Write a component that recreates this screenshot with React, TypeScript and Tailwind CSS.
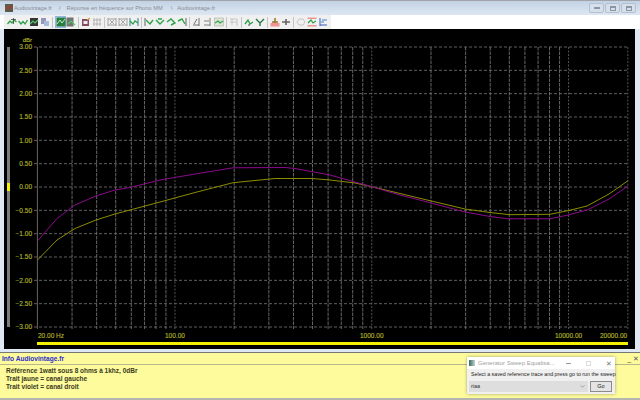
import type { ReactNode } from 'react';

const FONT = "font-['Liberation_Sans',Arial,sans-serif]";

const dbLevels = [3, 2.5, 2, 1.5, 1, 0.5, 0, -0.5, -1, -1.5, -2, -2.5, -3];
const freqs = [
  20, 30, 40, 50, 60, 70, 80, 90, 100, 200, 300, 400, 500, 600, 700, 800, 900, 1000, 2000, 3000, 4000, 5000, 6000,
  7000, 8000, 9000, 10000, 20000,
];
const decades = [100, 1000, 10000, 20000];

const xOf = (f: number) => 37.4 + (Math.log10(f) - Math.log10(20)) * 196.8;
const yOf = (db: number) => 187 - db * 46.67;

// relevés sur la capture (page px)
const violet =
  '37.5,241 57,218.5 75,205 96,196 115,190 130,187.5 160,180 195,174 233,167.8 285,167.5 295,168.5 330,175 371,186.5 400,195 430,202.7 465,212 490,216.5 508,218.8 550,218.8 568,215 587,210 609,199 628,186';
const jaune =
  '37.5,260 57,240 75,228.5 96,220 115,214 130,210 160,202 195,192.5 233,182.7 275,178.5 312,178.5 330,180 355,183 371,186.5 400,193.5 430,200.7 465,209 490,212.5 510,214.7 550,214.3 568,210.7 587,206 609,194 628,180.7';

function Chart() {
  return (
    <svg viewBox="4 29 631 320" className={`block h-[320px] w-[631px] ${FONT}`}>
      <rect x="4" y="29" width="631" height="320" fill="#000" />
      <rect x="7" y="47" width="3" height="280" fill="#7c7c7c" />
      <rect x="7" y="183" width="3" height="8" fill="#f5f000" />
      {dbLevels.map((db) => (
        <g key={db}>
          <line x1="34" x2="628" y1={yOf(db)} y2={yOf(db)} stroke="#6a6a6a" strokeWidth="0.9" strokeDasharray="3 2" />
          <text
            x="32"
            y={yOf(db) + 2.3}
            textAnchor="end"
            fontSize="6.5"
            fill="#b4b428"
            stroke="#b4b428"
            strokeWidth="0.15"
          >
            {db < 0 ? `−${(-db).toFixed(2)}` : db.toFixed(2)}
          </text>
        </g>
      ))}
      {freqs.map((f) => (
        <line
          key={f}
          x1={xOf(f)}
          x2={xOf(f)}
          y1="47"
          y2="329"
          stroke={decades.includes(f) ? '#5c5c5c' : '#707070'}
          strokeWidth="0.9"
          strokeDasharray={decades.includes(f) ? '2 1.5' : f === 20 ? undefined : '3.5 1'}
        />
      ))}
      <polyline points={jaune} fill="none" stroke="#8c8c00" strokeWidth="1" />
      <polyline points={violet} fill="none" stroke="#8c0a8c" strokeWidth="1" />
      <text x="32" y="42" textAnchor="end" fontSize="6" fill="#b4b428" stroke="#b4b428" strokeWidth="0.15">
        dBr
      </text>
      <g fontSize="6.5" fill="#b4b428" stroke="#b4b428" strokeWidth="0.15">
        <text x="38" y="338">
          20.00 Hz
        </text>
        <text x="165" y="338">
          100.00
        </text>
        <text x="360" y="338">
          1000.00
        </text>
        <text x="555" y="338">
          10000.00
        </text>
        <text x="600" y="338">
          20000.00
        </text>
      </g>
      <rect x="37" y="342" width="591" height="3" fill="#f5f000" />
    </svg>
  );
}

function Icon({ children, active }: { children: ReactNode; active?: boolean }) {
  return (
    <span
      className={`grid h-[12px] w-[11px] shrink-0 place-items-center ${active ? 'border border-[#8fb8e0] bg-[#c4dcf2]' : ''}`}
    >
      <svg viewBox="0 0 10 10" className="h-[10px] w-[10px] opacity-90" fill="none">
        {children}
      </svg>
    </span>
  );
}

const Sep = () => <span className="mx-[1.5px] h-[11px] w-px shrink-0 bg-[#c4c4c4]" />;

const G = '#1a9a38';
const wave = <path d="M0.5 7 3 4 5 6 7 3 9.5 5" stroke={G} strokeWidth="1.3" />;
const dip = <path d="M0.5 4 3 7 5 4.5 7 7 9.5 3" stroke={G} strokeWidth="1.3" />;
const cross = <path d="M6.5 1v6M4 2.5h5" stroke="#333" strokeWidth="0.8" />;
const bars = <path d="M1 1v8M9 1v8M1 2h8M1 8h8M3 3l4 4M7 3 3 7" stroke="#777" strokeWidth="0.7" />;
const grid = <path d="M2 1v8M5 1v8M8 1v8M1 3h8M1 7h8" stroke="#999" strokeWidth="0.7" />;

function Toolbar() {
  return (
    <div className="flex h-[14px] shrink-0 bg-white pl-[4px] pr-[4px]">
      <div className="flex w-[327px] items-center bg-[#f0f0f0] pl-[2.5px]">
        <Icon>{wave}{cross}</Icon>
        <Icon>{dip}</Icon>
        <Icon>
          <rect x="1" y="1" width="8" height="8" fill="#222" />
          <path d="M1 7 4 4 6 6 9 3" stroke="#3ec45a" strokeWidth="1.2" />
        </Icon>
        <Icon>
          <rect x="1" y="1" width="5" height="6" fill="#8d8db8" />
          <rect x="4" y="4" width="5" height="5" fill="#9db4dc" />
        </Icon>
        <Sep />
        <Icon active>
          <rect x="0.5" y="0.5" width="9" height="9" fill="#19732e" />
          <path d="M1 7 4 3 6 6 9 2" stroke="#b7f0b7" strokeWidth="1" />
        </Icon>
        <Icon>
          <rect x="0.5" y="0.5" width="7" height="9" fill="#666" />
          <path d="M2 7 5 4 9 8" stroke="#3ec45a" strokeWidth="1.2" />
        </Icon>
        <Sep />
        <Icon>
          <rect x="1" y="2" width="7" height="7" fill="#7a3b55" />
          <rect x="2.5" y="4" width="4" height="3" fill="#eee" />
          <path d="M6 3 9 1" stroke="#c8a020" strokeWidth="1.2" />
        </Icon>
        <Icon>{grid}</Icon>
        <Sep />
        <Icon>{bars}</Icon>
        <Icon>{bars}</Icon>
        <Icon>
          <path d="M1 1v8M9 1v8" stroke="#1d6e8c" strokeWidth="1" />
          <path d="M1 4 4 7 6 4 9 6" stroke={G} strokeWidth="1.3" />
        </Icon>
        <Sep />
        <Icon>
          <path d="M1 1v8" stroke="#444" strokeWidth="0.9" />
          <path d="M2 3 6 7 9 3" stroke={G} strokeWidth="1.4" />
        </Icon>
        <Icon>
          <path d="M1 3 5 7 9 3M3 2h4" stroke={G} strokeWidth="1.4" />
        </Icon>
        <Icon>
          <path d="M1 5 5 2 9 6 5 8" stroke={G} strokeWidth="1.4" />
        </Icon>
        <Icon>
          <path d="M9 1v8" stroke="#444" strokeWidth="0.9" />
          <path d="M1 4 5 2 8 7" stroke={G} strokeWidth="1.4" />
        </Icon>
        <Sep />
        <Icon>
          <path d="M7 1v8M1 8h6M2 7 5 2" stroke="#555" strokeWidth="0.9" />
        </Icon>
        <Icon>
          <path d="M7 1v8M1 8h6M1 4h5" stroke="#666" strokeWidth="0.9" />
        </Icon>
        <Icon>
          <rect x="0.5" y="1" width="9" height="8" fill="#d8e4d0" stroke="#999" strokeWidth="0.5" />
          <path d="M1 6 4 4 6 6 9 4" stroke={G} strokeWidth="1.1" />
        </Icon>
        <Sep />
        <Icon>
          <path d="M1 2h7v7M3 2v6M1 5h7" stroke="#bbb" strokeWidth="0.9" />
        </Icon>
        <Sep />
        <Icon>
          <path d="M1 7 4 3 6 7 9 5" stroke={G} strokeWidth="1.4" />
          <path d="M5 7v2" stroke="#333" strokeWidth="0.9" />
        </Icon>
        <Icon>
          <path d="M1 2 5 6 9 2M5 6v3" stroke="#176b33" strokeWidth="1.4" />
        </Icon>
        <Sep />
        <Icon>
          <rect x="0.5" y="6" width="9" height="3.5" fill="#f08a8a" />
          <path d="M5 1v5M2 5h6" stroke="#8a6a14" strokeWidth="1.5" />
        </Icon>
        <Icon>
          <path d="M1 5h8M5 2v6" stroke="#555" strokeWidth="1.6" />
        </Icon>
        <Sep />
        <Icon>
          <path d="M1 5 3 2h4l2 3-2 3H3z" stroke="#bbb" strokeWidth="0.9" />
        </Icon>
        <Icon>
          <rect x="0.5" y="8" width="9" height="1.5" fill="#f08a8a" />
          <rect x="0.5" y="0.5" width="9" height="1.5" fill="#f08a8a" />
          <path d="M1 6 4 3 6 6 9 4" stroke={G} strokeWidth="1.2" />
        </Icon>
        <Icon>
          <path d="M2 1v8M2 8h7" stroke="#2050b8" strokeWidth="1" />
          <path d="M3 5h3M4 3h5" stroke="#2b7dcc" strokeWidth="1.2" />
        </Icon>
      </div>
    </div>
  );
}

function WinButton({ children }: { children: ReactNode }) {
  return (
    <span className="grid h-[10px] w-[15px] place-items-center rounded-[2px] border border-[#b4c0ce] bg-[#d5e0ec]">
      {children}
    </span>
  );
}

function TitleBar() {
  return (
    <div
      className={`flex h-[15px] shrink-0 items-center border-t border-[#a0a4aa] bg-gradient-to-b from-[#c3d2e4] to-[#dde7f2] pl-[5px] pr-[4px] text-[5.7px] text-[#868c96] ${FONT}`}
    >
      <svg viewBox="0 0 8 8" className="mr-[1px] h-[8px] w-[8px] shrink-0">
        <rect width="8" height="8" fill="#5a5a48" />
        <path d="M0 6 3 2 5 5 8 1" stroke="#c8342c" fill="none" />
      </svg>
      <span>Audiovintage.fr</span>
      <span className="ml-[7px]">/</span>
      <span className="ml-[6px]">Réponse en fréquence sur Phono MM</span>
      <span className="ml-[8px]">\</span>
      <span className="ml-[5px]">Audiovintage.fr</span>
      <div className="ml-auto flex gap-[1px]">
        <WinButton>
          <span className="h-[2px] w-[6px] border border-[#8a96a2] bg-white" />
        </WinButton>
        <WinButton>
          <span className="h-[5px] w-[6px] border border-[#8a96a2] border-t-2" />
        </WinButton>
        <WinButton>
          <span className="h-[5px] w-[6px] border border-[#8a96a2] border-t-2" />
        </WinButton>
      </div>
    </div>
  );
}

function SweepDialog() {
  return (
    <div
      className={`absolute left-[467px] top-[4px] w-[148px] bg-[#f0f0f0] text-[#222] shadow-[0_0_3px_rgba(0,0,0,0.35)] ${FONT}`}
    >
      <div className="flex h-[12px] items-center bg-white pl-[2px] text-[6px] text-[#a0a0a0]">
        <span className="mr-[3px] h-[6px] w-[6px] bg-gradient-to-r from-[#2f6f5c] to-[#c6d0da]" />
        <span>Generator Sweep Equalisa...</span>
        <span className="ml-[11px] h-px w-[5px] bg-[#999]" />
        <span className="ml-[15px] h-[5px] w-[5px] border border-[#ddd]" />
        <span className="ml-[15px] text-[7px] leading-none text-[#777]">✕</span>
      </div>
      <p className="mt-[2px] whitespace-nowrap pl-[4px] text-[5.3px] leading-[7px]">
        Select a saved reference trace and press go to run the sweep
      </p>
      <div className="mt-[3px] flex items-center gap-[2px] px-[2px] pb-[2px]">
        <div className="flex h-[11px] w-[119px] items-center justify-between bg-[#dedede] pl-[2px] pr-[3px] text-[5.5px] text-[#333]">
          <span>riaa</span>
          <svg viewBox="0 0 6 4" className="h-[3px] w-[5px]" fill="none">
            <path d="M0.5 0.5 3 3 5.5 0.5" stroke="#777" strokeWidth="0.8" />
          </svg>
        </div>
        <div className="grid h-[11px] w-[22px] place-items-center border border-[#8a8a8a] bg-[#e4e4e4] text-[5.5px]">
          Go
        </div>
      </div>
    </div>
  );
}

function InfoPanel() {
  return (
    <div className={`relative mt-[3px] flex h-[46px] shrink-0 flex-col border-t border-[#777] bg-[#fdfb9c] ${FONT}`}>
      <div className="flex h-[12px] items-center justify-between border-b border-[#b9b78a] pl-[2px] pr-[1px]">
        <span className="text-[6.6px] font-bold text-[#2f2fc8]">Info Audiovintage.fr</span>
        <span className="text-[7px] leading-none text-[#555]">_ ✕</span>
      </div>
      <div className="pl-[6px] pt-[2px] text-[6.5px] font-bold leading-[8px] text-[#3a3a20]">
        <p>Référence 1watt sous 8 ohms à 1khz, 0dBr</p>
        <p>Trait jaune = canal gauche</p>
        <p>Trait violet = canal droit</p>
      </div>
      <SweepDialog />
    </div>
  );
}

export default function App() {
  return (
    <div className="flex h-[400px] w-[640px] flex-col overflow-hidden bg-[#dfe8f3]">
      <TitleBar />
      <Toolbar />
      <div className="flex pl-[4px]">
        <Chart />
      </div>
      <InfoPanel />
      <div className="h-[2px] bg-[#b4b4b0]" />
    </div>
  );
}
